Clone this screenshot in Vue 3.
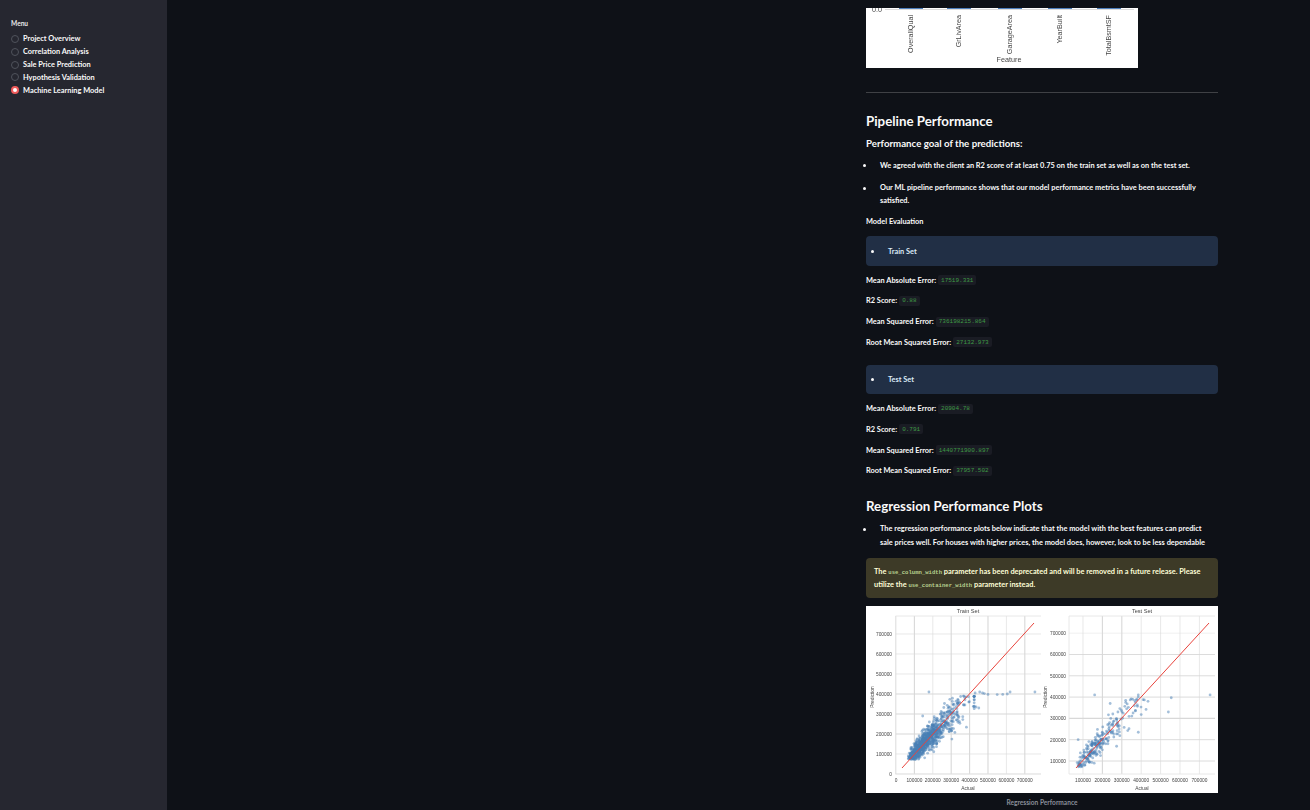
<script setup>
const menu = ['Project Overview', 'Correlation Analysis', 'Sale Price Prediction', 'Hypothesis Validation', 'Machine Learning Model']
const trainMetrics = [
  ['Mean Absolute Error:', '17519.331'],
  ['R2 Score:', '0.88'],
  ['Mean Squared Error:', '736198215.864'],
  ['Root Mean Squared Error:', '27132.973'],
]
const testMetrics = [
  ['Mean Absolute Error:', '20904.78'],
  ['R2 Score:', '0.791'],
  ['Mean Squared Error:', '1440771900.897'],
  ['Root Mean Squared Error:', '37957.502'],
]
const bars = [
  { name: 'OverallQual', x: 45 },
  { name: 'GrLivArea', x: 93 },
  { name: 'GarageArea', x: 144 },
  { name: 'YearBuilt', x: 194 },
  { name: 'TotalBsmtSF', x: 243 },
]

function rng(seed) {
  let s = seed
  return () => {
    s = (s + 0x6d2b79f5) | 0
    let t = Math.imul(s ^ (s >>> 15), 1 | s)
    t = (t + Math.imul(t ^ (t >>> 7), 61 | t)) ^ t
    return ((t ^ (t >>> 14)) >>> 0) / 4294967296
  }
}
function gauss(r) {
  return (r() + r() + r() + r() - 2) / 0.577
}
function makePoints(seed, count, extras, sx, sy, minX) {
  const r = rng(seed)
  const pts = []
  for (let i = 0; i < count; i++) {
    const x = Math.max(minX + r() * 30000, Math.min(425000, Math.exp(12.03 + 0.42 * gauss(r))))
    let y = x * 0.93 + 12000 + gauss(r) * (14000 + x * 0.1)
    y = Math.max(72000 + r() * 15000, Math.min(385000 + r() * 7000, y))
    pts.push({ cx: sx(x), cy: sy(y) })
  }
  extras.forEach(([x, y]) => pts.push({ cx: sx(x), cy: sy(y) }))
  return pts
}
const leftSx = (v) => 30 + (v / 100000) * 18.4
const leftSy = (v) => 168 - (v / 100000) * 20
const rightSx = (v) => 197.6 + (v / 100000) * 19.4
const rightSy = (v) => 176.3 - (v / 100000) * 21.3

const plots = [
  {
    title: 'Train Set', titleX: 102, box: [29.5, 10, 145.5, 158], yLabelX: 6, yTickX: 26, xLabelX: 102,
    xTicks: [0, 1, 2, 3, 4, 5, 6, 7].map((n) => ({ v: n * 100000, x: leftSx(n * 100000), w: n % 2 === 1 || n === 4 ? 1.1 : 0.6 })),
    yTicks: [0, 1, 2, 3, 4, 5, 6, 7].map((n) => ({ v: n * 100000, y: leftSy(n * 100000), w: n === 2 || n === 3 || n === 4 ? 1.1 : 0.6 })),
    line: [36, 162, 168, 17],
    points: makePoints(11, 860, [[179000, 410000], [145000, 290000], [430000, 405000], [455000, 410000], [470000, 405000], [480000, 402000], [500000, 398000], [550000, 397000], [580000, 398000], [605000, 400000], [620000, 410000], [755000, 410000], [420000, 338000], [435000, 335000], [450000, 330000], [320000, 208000]], leftSx, leftSy, 55000),
  },
  {
    title: 'Test Set', titleX: 276, box: [203, 10, 146, 158], yLabelX: 179, yTickX: 200, xLabelX: 276,
    xTicks: [1, 2, 3, 4, 5, 6, 7].map((n) => ({ v: n * 100000, x: rightSx(n * 100000), w: n === 2 || n === 3 ? 1.1 : 0.6 })),
    yTicks: [1, 2, 3, 4, 5, 6, 7].map((n) => ({ v: n * 100000, y: rightSy(n * 100000), w: n === 3 ? 1.4 : n === 7 ? 0.4 : 0.9 })),
    line: [210, 162, 343, 17],
    points: makePoints(29, 240, [[160000, 410000], [240000, 370000], [320000, 385000], [320000, 375000], [325000, 345000], [385000, 410000], [385000, 400000], [410000, 388000], [435000, 380000], [555000, 397000], [540000, 330000], [755000, 410000], [385000, 235000], [400000, 318000], [370000, 335000], [75000, 200000], [280000, 330000], [370000, 375000], [380000, 363000]], rightSx, rightSy, 60000),
  },
]
</script>

<template>
  <div class="app">
    <aside class="sidebar">
      <div class="menu-title">Menu</div>
      <div class="menu">
        <div v-for="(item, i) in menu" :key="item" class="menu-item">
          <span class="radio" :class="{ on: i === 4 }"></span>
          <span>{{ item }}</span>
        </div>
      </div>
    </aside>

    <main class="main">
      <div class="column">
        <svg class="top-chart" viewBox="0 0 272 60" width="272" height="60">
          <g class="soft">
            <text x="6" y="4" class="feature">0.0</text>
            <line x1="19" x2="268" y1="1.5" y2="1.5" stroke="#dcdcdc" stroke-width="1" />
            <rect v-for="b in bars" :key="b.name" :x="b.x - 12" y="0" width="24" height="1" fill="#4c7ebd" />
            <text
              v-for="b in bars"
              :key="b.name + 't'"
              class="feature"
              text-anchor="end"
              :transform="`translate(${b.x + 2} 7) rotate(-90)`"
            >{{ b.name }}</text>
            <text x="143" y="53.5" class="feature" text-anchor="middle">Feature</text>
          </g>
        </svg>

        <hr class="rule" />

        <h3 class="first-head">Pipeline Performance</h3>
        <p class="goal">Performance goal of the predictions:</p>
        <ul class="list one">
          <li>We agreed with the client an R2 score of at least 0.75 on the train set as well as on the test set.</li>
        </ul>
        <ul class="list two">
          <li>Our ML pipeline performance shows that our model performance metrics have been successfully satisfied.</li>
        </ul>
        <p class="evaluation">Model Evaluation</p>

        <div class="set-box train"><span class="set-dot"></span>Train Set</div>
        <div class="metrics">
          <div v-for="m in trainMetrics" :key="m[0]" class="metric">
            <span>{{ m[0] }}</span><code>{{ m[1] }}</code>
          </div>
        </div>

        <div class="set-box test"><span class="set-dot"></span>Test Set</div>
        <div class="metrics">
          <div v-for="m in testMetrics" :key="m[0]" class="metric">
            <span>{{ m[0] }}</span><code>{{ m[1] }}</code>
          </div>
        </div>

        <h3 class="second-head">Regression Performance Plots</h3>
        <ul class="list three">
          <li>The regression performance plots below indicate that the model with the best features can predict sale prices well. For houses with higher prices, the model does, however, look to be less dependable</li>
        </ul>

        <div class="warning">
          The <code>use_column_width</code> parameter has been deprecated and will be removed in a future release. Please utilize the <code>use_container_width</code> parameter instead.
        </div>

        <svg class="plots" viewBox="0 0 352 187" width="352" height="187">
          <g v-for="p in plots" :key="p.title" class="soft">
            <text :x="p.titleX" y="7" class="title" text-anchor="middle">{{ p.title }}</text>
            <line v-for="t in p.xTicks" :key="'x' + t.v" :x1="t.x" :x2="t.x" :y1="p.box[1]" :y2="p.box[1] + p.box[3]" stroke="#d8d8d8" :stroke-width="t.w" />
            <line v-for="t in p.yTicks" :key="'y' + t.v" :x1="p.box[0]" :x2="p.box[0] + p.box[2]" :y1="t.y" :y2="t.y" stroke="#d8d8d8" :stroke-width="t.w" />
            <line :x1="p.box[0]" :x2="p.box[0] + p.box[2]" :y1="p.box[1]" :y2="p.box[1]" stroke="#e2e2e2" stroke-width="0.8" />
            <line :x1="p.box[0]" :x2="p.box[0]" :y1="p.box[1]" :y2="p.box[1] + p.box[3]" stroke="#e2e2e2" stroke-width="0.8" />
            <line :x1="p.box[0]" :x2="p.box[0] + p.box[2]" :y1="p.box[1] + p.box[3]" :y2="p.box[1] + p.box[3]" stroke="#e2e2e2" stroke-width="0.8" />
            <circle v-for="(c, i) in p.points" :key="i" :cx="c.cx" :cy="c.cy" r="1.4" fill="#4a7fb5" fill-opacity="0.5" />
            <line :x1="p.line[0]" :y1="p.line[1]" :x2="p.line[2]" :y2="p.line[3]" stroke="#e8433c" stroke-width="1" />
            <text v-for="t in p.xTicks" :key="'xl' + t.v" :x="t.x" y="176" class="tick" text-anchor="middle">{{ t.v }}</text>
            <text v-for="t in p.yTicks" :key="'yl' + t.v" :x="p.yTickX" :y="t.y + 1.8" class="tick" text-anchor="end">{{ t.v }}</text>
            <text :x="p.xLabelX" y="183.5" class="tick" text-anchor="middle">Actual</text>
            <text class="tick" text-anchor="middle" :transform="`translate(${p.yLabelX + 1.5} 91) rotate(-90)`">Prediction</text>
          </g>
        </svg>
        <div class="caption">Regression Performance</div>
      </div>
    </main>
  </div>
</template>

<style scoped>
.app {
  display: flex;
  width: 1310px;
  height: 810px;
  overflow: hidden;
  background: #0e1117;
  color: #fafafa;
  font-family: Lato, "Noto Sans", sans-serif;
  font-weight: 700;
}
.sidebar {
  flex: 0 0 167px;
  box-sizing: border-box;
  background: #262730;
  padding: 18px 0 0 11px;
}
.menu-title {
  font-size: 6.6px;
  line-height: 11px;
  height: 14.6px;
  color: #e8e8ea;
}
.menu {
  display: flex;
  flex-direction: column;
}
.menu-item {
  display: flex;
  align-items: center;
  height: 12.8px;
  font-size: 7.4px;
  gap: 4px;
}
.radio {
  box-sizing: border-box;
  width: 8px;
  height: 8px;
  border-radius: 50%;
  background: #262730;
  border: 1px solid #50535c;
}
.radio.on {
  border: 2.5px solid #ee5a5a;
  background: #fff;
}
.main {
  flex: 1;
  display: flex;
  min-width: 0;
}
.column {
  width: 352px;
  margin-left: 699px;
  padding-top: 8px;
}
.top-chart {
  display: block;
  background: #fff;
}
.soft {
  filter: blur(0.3px);
}
.rule {
  height: 1px;
  margin: 24px 0 0;
  border: 0;
  background: #3f4145;
}
h3 {
  margin: 0;
  height: 18px;
  font-size: 13.3px;
  line-height: 18px;
  font-weight: 700;
}
.first-head {
  margin-top: 19px;
}
.second-head {
  margin-top: 16.3px;
}
.goal {
  margin: 5.5px 0 0;
  height: 14px;
  font-size: 9.7px;
  line-height: 14px;
}
.list {
  margin: 0;
  padding: 0;
  list-style: none;
  font-size: 7.4px;
}
.list li {
  display: flex;
  margin-left: -3px;
}
.list li::before {
  content: "";
  flex: none;
  width: 3px;
  height: 3px;
  margin: 4.5px 14px 0 0;
  border-radius: 50%;
  background: #fafafa;
}
.one {
  margin-top: 9.5px;
  line-height: 13px;
}
.two {
  margin-top: 10px;
  line-height: 12.5px;
}
.three {
  margin-top: 7px;
  padding-right: 10px;
  line-height: 14px;
}
.three li::before {
  margin-top: 5.5px;
}
.evaluation {
  margin: 9px 0 0;
  height: 12px;
  font-size: 7.4px;
  line-height: 12px;
}
.set-box {
  display: flex;
  align-items: center;
  box-sizing: border-box;
  height: 30px;
  padding-left: 5px;
  border-radius: 4px;
  background: #212f45;
  font-size: 7.4px;
  color: #dceaf7;
}
.train {
  margin-top: 8px;
}
.test {
  margin-top: 12.3px;
  height: 29.5px;
}
.set-dot {
  width: 3px;
  height: 3px;
  margin-right: 14px;
  border-radius: 50%;
  background: #fafafa;
}
.metrics {
  display: flex;
  flex-direction: column;
  padding-top: 4px;
}
.metric {
  display: flex;
  align-items: center;
  height: 20.67px;
  font-size: 7.4px;
}
.metric code {
  margin-left: 2px;
  padding: 1.5px 3px;
  border-radius: 2px;
  background: #1a1c24;
  color: #3f9a45;
  font-family: "Liberation Mono", monospace;
  font-size: 6px;
  font-weight: 400;
  line-height: 7px;
}
.warning {
  box-sizing: border-box;
  height: 40px;
  margin-top: 8px;
  padding: 8px 8px;
  border-radius: 4px;
  background: #3d3a27;
  color: #ffffd8;
  font-size: 7.4px;
  line-height: 12px;
}
.warning code {
  color: #b6cf8e;
  font-family: "Liberation Mono", monospace;
  font-size: 5.6px;
  font-weight: 700;
}
.plots {
  display: block;
  margin-top: 8px;
  background: #fff;
}
.title {
  font-family: "Liberation Sans", sans-serif;
  font-size: 5.6px;
  font-weight: 400;
  fill: #444;
}
.tick {
  font-family: "Liberation Sans", sans-serif;
  font-size: 4.8px;
  font-weight: 400;
  fill: #444;
}
.feature {
  font-family: "Liberation Sans", sans-serif;
  font-size: 7.2px;
  font-weight: 400;
  fill: #444;
}
.caption {
  margin-top: 3px;
  height: 12px;
  font-size: 6.6px;
  line-height: 12px;
  text-align: center;
  color: #8a8f99;
}
</style>
